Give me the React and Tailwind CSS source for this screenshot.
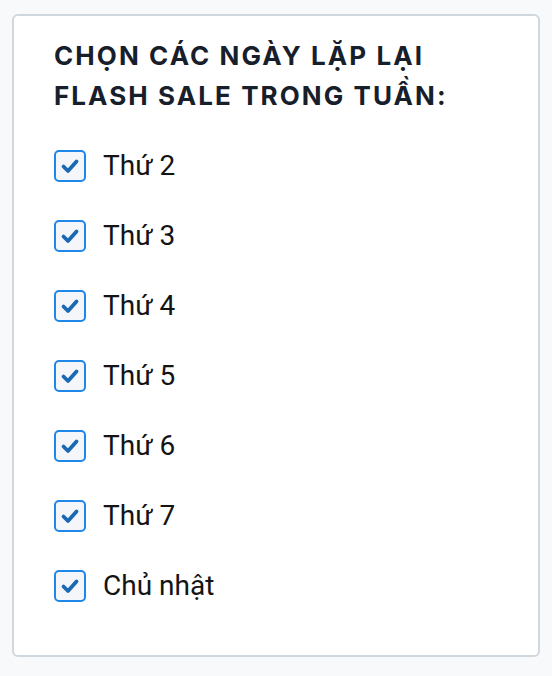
import React from "react";

const days = ["Thứ 2", "Thứ 3", "Thứ 4", "Thứ 5", "Thứ 6", "Thứ 7", "Chủ nhật"];

function Check() {
  return (
    <span className="flex h-[32px] w-[32px] shrink-0 items-center justify-center rounded-[5px] border-2 border-[#1f86ea] bg-[#f4f6f9]">
      <svg width="20" height="20" viewBox="0 0 20 20" fill="none">
        <path d="M3.5 10.5 L8 15 L16.5 5.5" stroke="#1b68b3" strokeWidth="3.8" strokeLinecap="round" strokeLinejoin="round" />
      </svg>
    </span>
  );
}

export default function App() {
  return (
    <div className="min-h-[676px] bg-[#f8f9fb] px-[12px] pt-[14px] pb-[19px]" style={{ fontFamily: "Roboto, sans-serif" }}>
      <div className="flex h-[643px] flex-col rounded-[6px] border-2 border-[#cfd8de] bg-white px-[40px] pt-[20px]">
        <h2 className="text-[26px] font-bold leading-[40px] tracking-[0.08em] text-[#17202a]" style={{ fontFamily: "Inter, sans-serif" }}>
          CHỌN CÁC NGÀY LẶP LẠI
          <br />
          FLASH SALE TRONG TUẦN:
        </h2>
        <div className="mt-[15px] flex flex-col">
          {days.map((d) => (
            <label key={d} className="flex h-[70px] items-center gap-[17px]">
              <Check />
              <span className="text-[28px] leading-none text-[#141414]">{d}</span>
            </label>
          ))}
        </div>
      </div>
    </div>
  );
}
